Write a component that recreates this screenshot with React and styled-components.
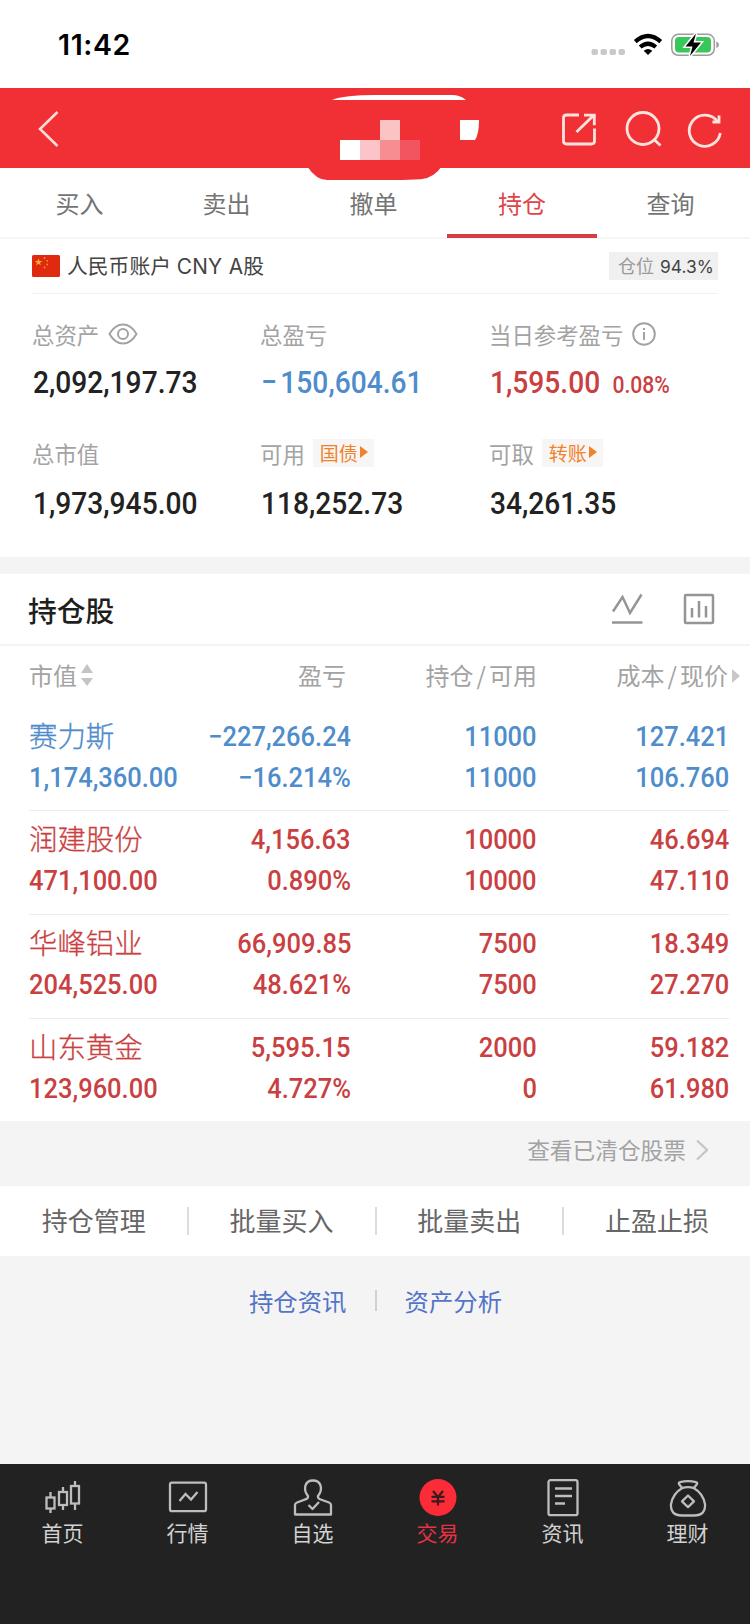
import React from 'react'
import styled, { createGlobalStyle } from 'styled-components'

const BLUE = '#4f8ccb'
const RED = '#c93f42'
const GRAY = '#a3a3a3'

const GlobalStyle = createGlobalStyle`
    * { box-sizing: border-box; }
    body {
        margin: 0;
        background: #f4f4f4;
        font-family: "Noto Sans CJK SC", sans-serif;
        font-weight: 400;
    }
`

const metrics = [
    { label: '总资产', value: '2,092,197.73', icon: 'eye' },
    { label: '总盈亏', value: '150,604.61', minus: true, color: BLUE },
    { label: '当日参考盈亏', value: '1,595.00', rate: '0.08%', color: RED, icon: 'info' },
    { label: '总市值', value: '1,973,945.00' },
    { label: '可用', value: '118,252.73', tag: '国债' },
    { label: '可取', value: '34,261.35', tag: '转账' }
]

const stocks = [
    { name: '赛力斯', market: '1,174,360.00', profit: '−227,266.24', rate: '−16.214%', hold: '11000', usable: '11000', cost: '127.421', price: '106.760', color: BLUE },
    { name: '润建股份', market: '471,100.00', profit: '4,156.63', rate: '0.890%', hold: '10000', usable: '10000', cost: '46.694', price: '47.110', color: RED },
    { name: '华峰铝业', market: '204,525.00', profit: '66,909.85', rate: '48.621%', hold: '7500', usable: '7500', cost: '18.349', price: '27.270', color: RED },
    { name: '山东黄金', market: '123,960.00', profit: '5,595.15', rate: '4.727%', hold: '2000', usable: '0', cost: '59.182', price: '61.980', color: RED }
]

const tabs = ['买入', '卖出', '撤单', '持仓', '查询']
const actions = ['持仓管理', '批量买入', '批量卖出', '止盈止损']

const navItems = [
    { label: '首页', icon: <CandleIcon /> },
    { label: '行情', icon: <QuoteIcon /> },
    { label: '自选', icon: <UserIcon /> },
    { label: '交易', icon: <TradeIcon />, active: true },
    { label: '资讯', icon: <NewsIcon /> },
    { label: '理财', icon: <MoneyBagIcon /> }
]

export default function App () {
    return (
        <Page>
            <GlobalStyle />
            <StatusBar>
                <Time>11:42</Time>
                <StatusIcons />
            </StatusBar>
            <Header>
                <BackIcon />
                <HeaderActions />
                <TitleMask />
            </Header>
            <Tabs>
                {tabs.map(x => <Tab key={x} $active={x === '持仓'}>{x}</Tab>)}
            </Tabs>
            <Summary>
                <Account>
                    <Flag />
                    <AccountName>人民币账户 <Latin>CNY A</Latin>股</AccountName>
                    <Position>仓位 <PositionRate>94.3%</PositionRate></Position>
                </Account>
                <Metrics>
                    {metrics.map(x => <MetricItem key={x.label} {...x} />)}
                </Metrics>
            </Summary>
            <Holdings>
                <HoldingsTitle>
                    <Title>持仓股</Title>
                    <ChartIcons />
                </HoldingsTitle>
                <TableHead>
                    <HeadCell>市值<SortIcon /></HeadCell>
                    <HeadCell $right $shift='5px'>盈亏</HeadCell>
                    <HeadCell $right>持仓<Slash>/</Slash>可用</HeadCell>
                    <HeadCell $right $shift='1px'>成本<Slash>/</Slash>现价</HeadCell>
                    <MoreArrow width='8' height='14' viewBox='0 0 8 14'><path d='M0 0l8 7-8 7z' fill='#c8c8c8' /></MoreArrow>
                </TableHead>
                {stocks.map(x => <StockRow key={x.name} {...x} />)}
            </Holdings>
            <Cleared>
                查看已清仓股票
                <svg width='12' height='22' viewBox='0 0 12 22' fill='none' stroke='#c6c6c6' strokeWidth='2.400'><path d='M1 1.500l10 9.500-10 9.500' /></svg>
            </Cleared>
            <Actions>
                {actions.map(x => <Action key={x}>{x}</Action>)}
            </Actions>
            <Links>
                <Link>持仓资讯</Link>
                <LinkLine />
                <Link>资产分析</Link>
            </Links>
            <BottomNav>
                {navItems.map(x => (
                    <NavItem key={x.label} $active={x.active}>
                        {x.icon}
                        <span>{x.label}</span>
                    </NavItem>
                ))}
            </BottomNav>
        </Page>
    )
}

const MetricItem = ({ label, value, minus, rate, color, icon, tag }) => {
    return (
        <Metric>
            <MetricLabel>
                {label}
                {icon === 'eye' && <EyeIcon />}
                {icon === 'info' && <InfoIcon />}
                {tag && <Tag>{tag}<svg width='8' height='12' viewBox='0 0 8 12'><path d='M0 0l8 6-8 6z' fill='#f0822c' /></svg></Tag>}
            </MetricLabel>
            <MetricValue $color={color}>
                {minus && <Minus>−</Minus>}
                {value}
                {rate && <MetricRate>{rate}</MetricRate>}
            </MetricValue>
        </Metric>
    )
}

const StockRow = ({ name, market, profit, rate, hold, usable, cost, price, color }) => {
    return (
        <Row $color={color}>
            <Cell>
                <StockName>{name}</StockName>
                <Num>{market}</Num>
            </Cell>
            <Cell $right>
                <Num $right>{profit}</Num>
                <Num $right>{rate}</Num>
            </Cell>
            <Cell $right>
                <Num $right>{hold}</Num>
                <Num $right>{usable}</Num>
            </Cell>
            <Cell $right>
                <Num $right>{cost}</Num>
                <Num $right>{price}</Num>
            </Cell>
        </Row>
    )
}

// Icons
function StatusIcons () {
    return (
        <svg width='130' height='26' viewBox='590 32 130 26'>
            <g fill='#c9c9c9'>
                <rect x='591.500' y='49' width='6.500' height='6' rx='2' />
                <rect x='600.500' y='49' width='6.500' height='6' rx='2' />
                <rect x='609.500' y='49' width='6.500' height='6' rx='2' />
                <rect x='618.500' y='49' width='6.500' height='6' rx='2' />
            </g>
            <g fill='none' stroke='#000' strokeWidth='4.200'>
                <path d='M635.300 41.600Q648 30.400 660.700 41.600' />
                <path d='M640.200 47Q648 40.400 655.800 47' />
            </g>
            <path d='M643.700 50.700Q648 47.400 652.300 50.700L648 55z' fill='#000' />
            <rect x='671.800' y='34.300' width='42.500' height='21' rx='6.500' fill='#fff' stroke='#9c9c9c' strokeWidth='1.500' />
            <rect x='675' y='37' width='36' height='15.600' rx='4' fill='#38c759' />
            <path d='M716.300 41.500q2.700.8 2.700 3.300t-2.700 3.300z' fill='#9c9c9c' />
            <path d='M696 33.500l-10.500 13h7l-2.500 9.500 11-13.500h-7.500z' fill='#000' stroke='#fff' strokeWidth='3' paintOrder='stroke' />
        </svg>
    )
}

function BackIcon () {
    return (
        <svg width='22' height='38' viewBox='0 0 22 38' fill='none' stroke='#ffdcd6' strokeWidth='2.600'>
            <path d='M20.500 2L3 19l17.500 17' />
        </svg>
    )
}

function HeaderActions () {
    return (
        <svg width='164' height='40' viewBox='560 109 164 40' fill='none' stroke='#ffe4de' strokeWidth='2.800'>
            <path d='M579 115h-12.500q-3 0-3 3v23q0 3 3 3h25q3 0 3-3v-12.500' />
            <path d='M576.500 132L593.500 115.500M584 115.200h10.300v10' />
            <circle cx='643' cy='128.500' r='16' />
            <path d='M653.500 139l7 6.500' />
            <path d='M717.500 121.500A15.600 15.600 0 1 0 720.300 133' />
            <path d='M719 115.500v6.500h-6.500' />
        </svg>
    )
}

function EyeIcon () {
    return (
        <svg width='30' height='24' viewBox='0 0 30 24' fill='none' stroke='#a3a3a3' strokeWidth='2'>
            <path d='M1.500 12Q7 2.500 15 2.500T28.500 12Q23 21.500 15 21.500T1.500 12z' />
            <circle cx='15' cy='12' r='5' />
        </svg>
    )
}

function InfoIcon () {
    return (
        <svg width='24' height='24' viewBox='0 0 24 24' fill='none' stroke='#a3a3a3' strokeWidth='2'>
            <circle cx='12' cy='12' r='10.800' />
            <path d='M12 10v8M12 6v2' />
        </svg>
    )
}

function Flag () {
    return (
        <svg width='28' height='22' viewBox='0 0 28 22'>
            <rect width='28' height='22' rx='1.500' fill='#df2a10' />
            <path d='M6.500 3.500l1 2.500h2.700L8 7.700l.8 2.600-2.300-1.600-2.300 1.600.8-2.600-2.200-1.700h2.700z' fill='#ffb52b' />
            <g fill='#f5962a'>
                <circle cx='12.500' cy='3' r='.9' />
                <circle cx='15.200' cy='5.800' r='.9' />
                <circle cx='15.200' cy='9.500' r='.9' />
                <circle cx='12.500' cy='12.500' r='.9' />
            </g>
        </svg>
    )
}

function ChartIcons () {
    return (
        <svg width='104' height='32' viewBox='611 593 104 32' fill='none' stroke='#959595' strokeWidth='2.500'>
            <path d='M613 611.500l9.500-14.500 7.500 16 11.500-18.500M612 622.500h30.500' />
            <rect x='685' y='595' width='28' height='28' rx='1' />
            <path d='M692 608v9.500M699 601v16.500M706 606v11.500' />
        </svg>
    )
}

function SortIcon () {
    return (
        <svg width='12' height='22' viewBox='0 0 12 22' fill='#c4c4c4'>
            <path d='M6 0l6 9H0zM6 22l6-8H0z' />
        </svg>
    )
}

function CandleIcon () {
    return (
        <svg width='40' height='38' viewBox='0 0 40 38' fill='none' stroke='#bdbdbd' strokeWidth='2.300'>
            <path d='M7.500 13v5M7.500 30v4M20 8v5M20 26v5M32 2v5M32 25v6' />
            <rect x='3.500' y='18.500' width='8' height='11' />
            <rect x='16' y='13' width='8' height='13' />
            <rect x='28' y='7' width='8' height='17.500' />
        </svg>
    )
}

function QuoteIcon () {
    return (
        <svg width='40' height='38' viewBox='0 0 40 38' fill='none' stroke='#bdbdbd' strokeWidth='2.300'>
            <rect x='2' y='3.700' width='36' height='28.500' rx='2' />
            <path d='M11.500 22l6-7 5.500 5.500 6.500-7.500' />
        </svg>
    )
}

function UserIcon () {
    return (
        <svg width='40' height='38' viewBox='0 0 40 38' fill='none' stroke='#bdbdbd' strokeWidth='2.300' strokeLinejoin='round'>
            <path d='M15 17C9.500 10 12 1.500 20 1.500S30.500 10 25 17q-.3 2.300 2 3.200l9 3.300q2 .8 2 2.500v9.500H2V26q0-1.700 2-2.500l9-3.300q2.300-.9 2-3.200z' />
            <path d='M15.500 26l4 4 6.500-7' />
        </svg>
    )
}

function TradeIcon () {
    return (
        <svg width='40' height='38' viewBox='0 0 40 38'>
            <circle cx='20' cy='18.500' r='18.500' fill='#fb2b37' />
            <path d='M15 12l5 6 5-6M13.500 17.800h13M13.500 22.300h13M20 18v8.500' fill='none' stroke='#3a1c1e' strokeWidth='2.200' />
        </svg>
    )
}

function NewsIcon () {
    return (
        <svg width='40' height='38' viewBox='0 0 40 38' fill='none' stroke='#bdbdbd' strokeWidth='2.300'>
            <rect x='5.500' y='1.200' width='29' height='35' rx='2' />
            <path d='M12 9.500h17M12 17h17M12 24.500h10' />
        </svg>
    )
}

function MoneyBagIcon () {
    return (
        <svg width='40' height='38' viewBox='0 0 40 38' fill='none' stroke='#bdbdbd' strokeWidth='2.300' strokeLinejoin='round'>
            <path d='M14 9l-3-4q-.5-1.500 1-1.800Q20 1 28 3.200q1.500.3 1 1.800l-3 4M14 9.200Q20 7 26 9.200q9 5 11 16Q38 36.500 26 36.500H14Q2 36.500 3 25.200q2-11 11-16z' />
            <path d='M20 16.500l6 5.800-6 5.800-6-5.800z' />
        </svg>
    )
}

// Covered account name that hangs over the header
const TitleMask = () => (
    <MaskSvg width='190' height='90' viewBox='300 90 190 90'>
        <path d='M307 166q9 14 20 14h75l19-.7q13-1.300 21-13.300z' fill='#f03035' />
        <path d='M332 100Q344 95 376 95h76q8 0 14 5z' fill='#fff' />
        <path d='M340 140h20v20h-20z' fill='#fff' />
        <path d='M360 140h20v20h-20z' fill='#fbc4c8' />
        <path d='M380 120h20v20h-20z' fill='#fbc4c4' />
        <path d='M380 140h20v20h-20z' fill='#f78d91' />
        <path d='M400 140h20v20h-20z' fill='#f25560' />
        <path d='M460 120h19q0 14-4 20h-15z' fill='#fff' />
    </MaskSvg>
)

const MaskSvg = styled.svg`
    position: absolute;
    left: 300px;
    top: 2px;
`

const Page = styled.div`
    width: 750px;
    height: 1624px;
    display: flex;
    flex-direction: column;
    background: #f4f4f4;
`
const StatusBar = styled.div`
    height: 88px;
    display: flex;
    justify-content: space-between;
    align-items: center;
    padding: 2px 30px 0 58px;
    background: #fff;
`
const Time = styled.span`
    margin-top: -1px;
    font: 600 28.500px Inter, sans-serif;
    letter-spacing: .6px;
`
const Header = styled.div`
    position: relative;
    height: 80px;
    display: flex;
    justify-content: space-between;
    align-items: center;
    padding: 1px 26px 0 37px;
    background: #f03035;
`
const Tabs = styled.div`
    height: 71px;
    display: grid;
    grid-template-columns: 147px 147px 147px 150px 147px;
    padding: 0 6px;
    background: #fff;
    border-bottom: 2px solid #f5f5f5;
`
const Tab = styled.div`
    display: flex;
    justify-content: center;
    height: 70px;
    line-height: 69px;
    font-size: 24px;
    color: ${({ $active }) => $active ? '#dd464b' : '#747474'};
    border-bottom: 4px solid ${({ $active }) => $active ? '#d63c43' : 'transparent'};
`
const Summary = styled.div`
    height: 318px;
    padding: 0 32px;
    background: #fff;
`
const Account = styled.div`
    height: 55px;
    display: flex;
    align-items: center;
    border-bottom: 1px solid #f2f2f2;
`
const AccountName = styled.span`
    flex: 1;
    margin: -2px 0 0 7px;
    font-size: 20.800px;
    color: #444;
`
const Latin = styled.span`
    margin-left: 1px;
    font-family: Inter, sans-serif;
    font-size: 20.800px;
    letter-spacing: .3px;
`
const Position = styled.span`
    width: 109px;
    height: 28px;
    line-height: 26px;
    padding-left: 9px;
    font-size: 18px;
    white-space: nowrap;
    color: #9a9a9a;
    background: #f0f0f0;
`
const PositionRate = styled.span`
    margin-left: 2px;
    font: 400 17.400px Inter, sans-serif;
    color: #444;
`
const Metrics = styled.div`
    display: grid;
    grid-template-columns: 228px 229px 1fr;
    grid-auto-rows: 119px;
    padding-top: 20px;
`
const Metric = styled.div`
    display: flex;
    flex-direction: column;
    &:nth-child(n + 4) {
        row-gap: 2px;
    }
`
const MetricLabel = styled.div`
    height: 40px;
    display: flex;
    align-items: center;
    gap: 9px;
    font-size: 22.400px;
    color: ${GRAY};
`
const MetricValue = styled.div`
    display: flex;
    align-items: baseline;
    align-self: flex-start;
    height: 57px;
    line-height: 57px;
    margin-left: 1px;
    font-family: Roboto, sans-serif;
    font-size: 32px;
    font-weight: 500;
    transform: scaleX(.88);
    transform-origin: left;
    color: ${({ $color }) => $color || '#222'};
`
const Minus = styled.span`
    margin-right: 4px;
`
const MetricRate = styled.span`
    margin-left: 14px;
    font-size: 24px;
`
const Tag = styled.span`
    height: 28px;
    display: flex;
    align-items: center;
    gap: 2px;
    margin-left: -1px;
    padding: 0 6px 2px 7px;
    font-size: 19px;
    color: #f0822c;
    background: #f8f6f5;
`
const Holdings = styled.div`
    margin-top: 17px;
    height: 547px;
    background: #fff;
`
const HoldingsTitle = styled.div`
    height: 72px;
    display: flex;
    justify-content: space-between;
    align-items: center;
    padding: 0 35px 0 28px;
    border-bottom: 2px solid #f4f4f4;
`
const Title = styled.span`
    font-size: 28.800px;
    font-weight: 500;
    color: #1f1f1f;
`
const TableHead = styled.div`
    position: relative;
    display: grid;
    grid-template-columns: 170px 152px 186px 192px;
    height: 60px;
    padding: 0 0 3px 29px;
    font-size: 24px;
    color: ${GRAY};
`
const HeadCell = styled.div`
    display: flex;
    align-items: center;
    gap: 4px;
    justify-content: ${({ $right }) => $right ? 'flex-end' : 'flex-start'};
    padding-right: ${({ $shift }) => $shift || '0'};
`
const Slash = styled.span`
    margin: 0 -1px;
`
const MoreArrow = styled.svg`
    position: absolute;
    right: 10px;
    top: 23px;
`
const Row = styled.div`
    display: grid;
    grid-template-columns: 170px 152px 186px 192px;
    height: 104px;
    margin-left: 29px;
    margin-right: 21px;
    padding-top: 10px;
    color: ${({ $color }) => $color};
    & + & {
        padding-top: 8px;
        border-top: 1px solid #ebebeb;
    }
`
const Cell = styled.div`
    display: flex;
    flex-direction: column;
    align-items: ${({ $right }) => $right ? 'flex-end' : 'flex-start'};
`
const StockName = styled.span`
    height: 40.500px;
    line-height: 38px;
    font-size: 28.400px;
    font-weight: 300;
    -webkit-text-stroke: .3px currentColor;
`
const Num = styled.span`
    height: 40.500px;
    line-height: 42px;
    font-family: Roboto, sans-serif;
    font-size: 28px;
    font-weight: 500;
    transform: scaleX(.91);
    transform-origin: ${({ $right }) => $right ? 'right' : 'left'};
`
const Cleared = styled.div`
    height: 65px;
    display: flex;
    justify-content: flex-end;
    align-items: center;
    gap: 10px;
    padding: 0 42px 8px 0;
    font-size: 22.700px;
    color: ${GRAY};
`
const Actions = styled.div`
    height: 70px;
    display: flex;
    align-items: center;
    padding-left: 1px;
    background: #fff;
`
const Action = styled.div`
    flex: 1;
    height: 28px;
    line-height: 26px;
    text-align: center;
    font-size: 26px;
    color: #666;
    & + & {
        border-left: 2px solid #dcdcdc;
    }
`
const Links = styled.div`
    display: flex;
    justify-content: center;
    align-items: center;
    gap: 28px;
    height: 89px;
    padding-left: 1px;
`
const Link = styled.span`
    font-size: 24.400px;
    color: #5474c8;
`
const LinkLine = styled.span`
    width: 2px;
    height: 21px;
    background: #d0d0d0;
`
const BottomNav = styled.div`
    display: flex;
    height: 160px;
    margin-top: auto;
    padding-top: 15px;
    background: #222;
`
const NavItem = styled.div`
    flex: 1;
    display: flex;
    flex-direction: column;
    align-items: center;
    line-height: 31px;
    font-size: 21px;
    color: ${({ $active }) => $active ? '#e83343' : '#d2d2d2'};
`
